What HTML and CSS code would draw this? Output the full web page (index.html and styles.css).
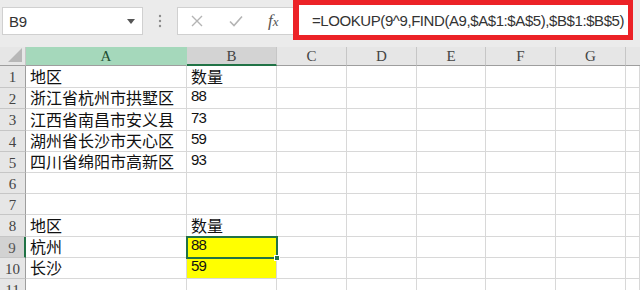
FILE: index.html
```html
<!DOCTYPE html>
<html>
<head>
<meta charset="utf-8">
<link rel="stylesheet" href="styles.css">
</head>
<body>
<div class="app">
  <div class="toolbar">
    <div class="namebox">
      <span class="ref">B9</span>
      <svg class="drop" width="8" height="5" viewBox="0 0 8 5"><path d="M0 0h8L4 5z" fill="#555"/></svg>
    </div>
    <div class="grip">
      <svg width="4" height="14" viewBox="0 0 4 14"><circle cx="2" cy="2" r="1.2" fill="#8c8c8c"/><circle cx="2" cy="7" r="1.2" fill="#8c8c8c"/><circle cx="2" cy="12" r="1.2" fill="#8c8c8c"/></svg>
    </div>
    <div class="fxbox">
      <svg class="ico" width="14" height="14" viewBox="0 0 14 14"><path d="M2 2L12 12M12 2L2 12" stroke="#b4b4b4" stroke-width="1.4" fill="none"/></svg>
      <svg class="ico" width="16" height="14" viewBox="0 0 16 14"><path d="M2 7.5L6 11.5L14 2.5" stroke="#b4b4b4" stroke-width="1.6" fill="none"/></svg>
      <span class="fx">f<span class="fxx">x</span></span>
    </div>
    <div class="formula">=LOOKUP(9^9,FIND(A9,$A$1:$A$5),$B$1:$B$5)</div>
  </div>
  <div class="sheet">
    <div class="corner"><svg width="14" height="14" viewBox="0 0 14 14"><path d="M14 0V14H0z" fill="#b7b7b7"/></svg></div>
    <div class="ch ch-a">A</div>
    <div class="ch ch-b">B</div>
    <div class="ch">C</div>
    <div class="ch">D</div>
    <div class="ch">E</div>
    <div class="ch">F</div>
    <div class="ch">G</div>
    <div class="ch ch-last"></div>

    <div class="rh">1</div><div class="c">地区</div><div class="c">数量</div><div class="c"></div><div class="c"></div><div class="c"></div><div class="c"></div><div class="c"></div><div class="c"></div>
    <div class="rh">2</div><div class="c">浙江省杭州市拱墅区</div><div class="c num">88</div><div class="c"></div><div class="c"></div><div class="c"></div><div class="c"></div><div class="c"></div><div class="c"></div>
    <div class="rh">3</div><div class="c">江西省南昌市安义县</div><div class="c num">73</div><div class="c"></div><div class="c"></div><div class="c"></div><div class="c"></div><div class="c"></div><div class="c"></div>
    <div class="rh">4</div><div class="c">湖州省长沙市天心区</div><div class="c num">59</div><div class="c"></div><div class="c"></div><div class="c"></div><div class="c"></div><div class="c"></div><div class="c"></div>
    <div class="rh">5</div><div class="c">四川省绵阳市高新区</div><div class="c num">93</div><div class="c"></div><div class="c"></div><div class="c"></div><div class="c"></div><div class="c"></div><div class="c"></div>
    <div class="rh">6</div><div class="c"></div><div class="c"></div><div class="c"></div><div class="c"></div><div class="c"></div><div class="c"></div><div class="c"></div><div class="c"></div>
    <div class="rh">7</div><div class="c"></div><div class="c"></div><div class="c"></div><div class="c"></div><div class="c"></div><div class="c"></div><div class="c"></div><div class="c"></div>
    <div class="rh">8</div><div class="c">地区</div><div class="c">数量</div><div class="c"></div><div class="c"></div><div class="c"></div><div class="c"></div><div class="c"></div><div class="c"></div>
    <div class="rh rh-sel">9</div><div class="c">杭州</div><div class="c num yellow active">88<span class="handle"></span></div><div class="c"></div><div class="c"></div><div class="c"></div><div class="c"></div><div class="c"></div><div class="c"></div>
    <div class="rh">10</div><div class="c">长沙</div><div class="c num yellow">59</div><div class="c"></div><div class="c"></div><div class="c"></div><div class="c"></div><div class="c"></div><div class="c"></div>
    <div class="rh">11</div><div class="c"></div><div class="c"></div><div class="c"></div><div class="c"></div><div class="c"></div><div class="c"></div><div class="c"></div><div class="c"></div>
  </div>
</div>
</body>
</html>
```
FILE: styles.css
```css
* { box-sizing: border-box; }
html, body { margin: 0; padding: 0; }
body {
  width: 640px;
  height: 290px;
  overflow: hidden;
  background: #ffffff;
  font-family: "Liberation Sans", Arial, sans-serif;
}
.app { width: 640px; height: 290px; overflow: hidden; }

.toolbar {
  height: 47px;
  background: #ebebeb;
  display: flex;
  align-items: flex-start;
}
.namebox {
  margin: 7px 0 0 2px;
  width: 141px;
  height: 28px;
  background: #fff;
  border: 1px solid #d0d0d0;
  display: flex;
  align-items: center;
  justify-content: space-between;
  padding: 0 7px 0 6px;
}
.ref { font-size: 15px; color: #333; letter-spacing: -0.2px; }
.drop { margin-top: 1px; }
.grip {
  width: 34px;
  height: 42px;
  display: flex;
  align-items: center;
  justify-content: center;
}
.fxbox {
  margin-top: 7px;
  width: 116px;
  height: 28px;
  background: #fff;
  border: 1px solid #d0d0d0;
  border-right: none;
  display: flex;
  align-items: center;
  padding-left: 12px;
  gap: 0;
}
.ico:first-child { margin-right: 24px; }
.ico:nth-child(2) { margin-right: 24px; }
.fx {
  font-family: "Liberation Serif", "Times New Roman", serif;
  font-style: italic;
  font-size: 17px;
  color: #555;
}
.fxx { font-size: 13px; }
.formula {
  width: 340px;
  height: 40px;
  background: #fff;
  border: 5px solid #ec2227;
  border-left-width: 6px;
  display: flex;
  align-items: center;
  padding-left: 13px;
  font-size: 15px;
  letter-spacing: -0.42px;
  color: #333;
  white-space: nowrap;
  overflow: hidden;
}

.sheet {
  display: grid;
  grid-template-columns: 26px 161px 90px 70px 70px 69px 70px 70px 1fr;
  grid-template-rows: 19px 22px 21px 22px 21px 21px 21px 21px 22px 21px 21px 21px;
}
.corner {
  background: #e6e6e6;
  border-right: 1px solid #c6c6c6;
  border-bottom: 1px solid #9e9e9e;
  display: flex;
  align-items: flex-end;
  justify-content: flex-end;
  padding: 0 3px 3px 0;
}
.ch {
  background: #e6e6e6;
  border-right: 1px solid #c6c6c6;
  border-bottom: 1px solid #9e9e9e;
  font-family: "Liberation Serif", "Times New Roman", serif;
  font-size: 15px;
  color: #444;
  display: flex;
  align-items: center;
  justify-content: center;
  line-height: 1;
  padding-top: 1px;
}
.ch-a { background: #a5d8bb; color: #1f4f32; border-right-color: #a5d8bb; }
.ch-b { background: #d3d3d3; border-bottom: 2px solid #217346; }
.ch-last { border-right: none; }
.rh {
  background: #e6e6e6;
  border-right: 1px solid #9e9e9e;
  border-bottom: 1px solid #c6c6c6;
  font-family: "Liberation Serif", "Times New Roman", serif;
  font-size: 15px;
  color: #444;
  display: flex;
  align-items: center;
  justify-content: center;
  line-height: 1;
  padding-top: 2px;
}
.rh-sel { background: #d2d2d2; border-right: 2px solid #217346; color: #555; }
.c {
  border-right: 1px solid #d8d8d8;
  border-bottom: 1px solid #d8d8d8;
  display: flex;
  align-items: flex-end;
  padding: 0 0 1px 4px;
  font-family: "Noto Sans CJK SC", "Liberation Sans", sans-serif;
  font-size: 16px;
  line-height: 20px;
  color: #111;
  white-space: nowrap;
  position: relative;
}
.num {
  font-family: "Liberation Sans", Arial, sans-serif;
  font-size: 15px;
  letter-spacing: -0.9px;
  padding-bottom: 2px;
}
.yellow { background: #ffff00; }
.active { outline: 2px solid #217346; outline-offset: -1px; z-index: 1; }
.handle {
  position: absolute;
  right: -4px;
  bottom: -4px;
  width: 6px;
  height: 6px;
  background: #217346;
  border: 1px solid #fff;
}
```
